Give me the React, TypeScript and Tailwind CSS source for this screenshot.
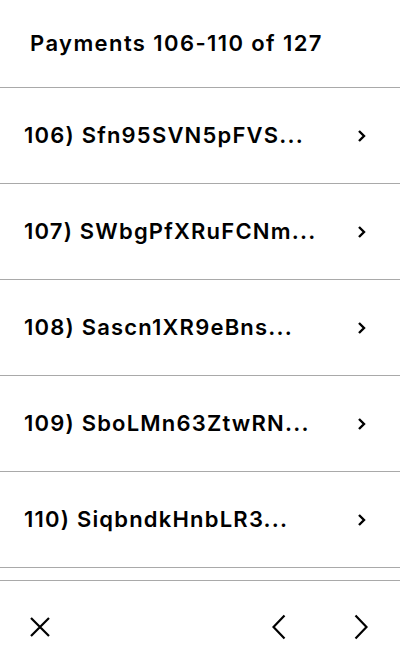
const payments = [
  { n: 106, id: "Sfn95SVN5pFVS..." },
  { n: 107, id: "SWbgPfXRuFCNm..." },
  { n: 108, id: "Sascn1XR9eBns..." },
  { n: 109, id: "SboLMn63ZtwRN..." },
  { n: 110, id: "SiqbndkHnbLR3..." },
];

const Chevron = ({ dir }: { dir: "left" | "right" }) => (
  <svg viewBox="0 0 14 26" fill="none" stroke="currentColor" strokeWidth={2.2} className="h-[26px] w-[14px]">
    {dir === "right" ? <path d="M1.5 1.5L12.5 13 1.5 24.5" /> : <path d="M12.5 1.5L1.5 13l11 11.5" />}
  </svg>
);

export default function App() {
  return (
    <div className="flex h-[672px] w-[400px] flex-col bg-white text-black" style={{ fontFamily: "Inter, 'Noto Sans', sans-serif" }}>
      {/* header */}
      <div className="flex h-[87px] items-center pl-[30px] text-[22px] font-semibold tracking-[1.4px]">
        Payments 106-110 of 127
      </div>

      {/* list */}
      <div className="border-t border-[#a9a9a9]">
        {payments.map((p) => (
          <div key={p.n} className="flex h-[96px] items-center justify-between border-b border-[#a9a9a9] pl-[24px] pr-[33px]">
            <span className="text-[22px] font-semibold tracking-[1.2px]">
              {p.n}) {p.id}
            </span>
            <svg viewBox="0 0 10 14" fill="none" stroke="currentColor" strokeWidth={2.4} className="h-[14px] w-[10px]">
              <path d="M2 2l5 5-5 5" />
            </svg>
          </div>
        ))}
      </div>

      {/* footer */}
      <div className="mt-[12px] flex flex-1 items-center border-t border-[#a9a9a9] pl-[29px] pr-[32px]">
        <svg viewBox="0 0 22 22" fill="none" stroke="currentColor" strokeWidth={2.2} className="h-[22px] w-[22px]">
          <path d="M2 2l18 18M20 2L2 20" />
        </svg>
        <div className="ml-auto flex items-center gap-[68px]">
          <Chevron dir="left" />
          <Chevron dir="right" />
        </div>
      </div>
    </div>
  );
}
